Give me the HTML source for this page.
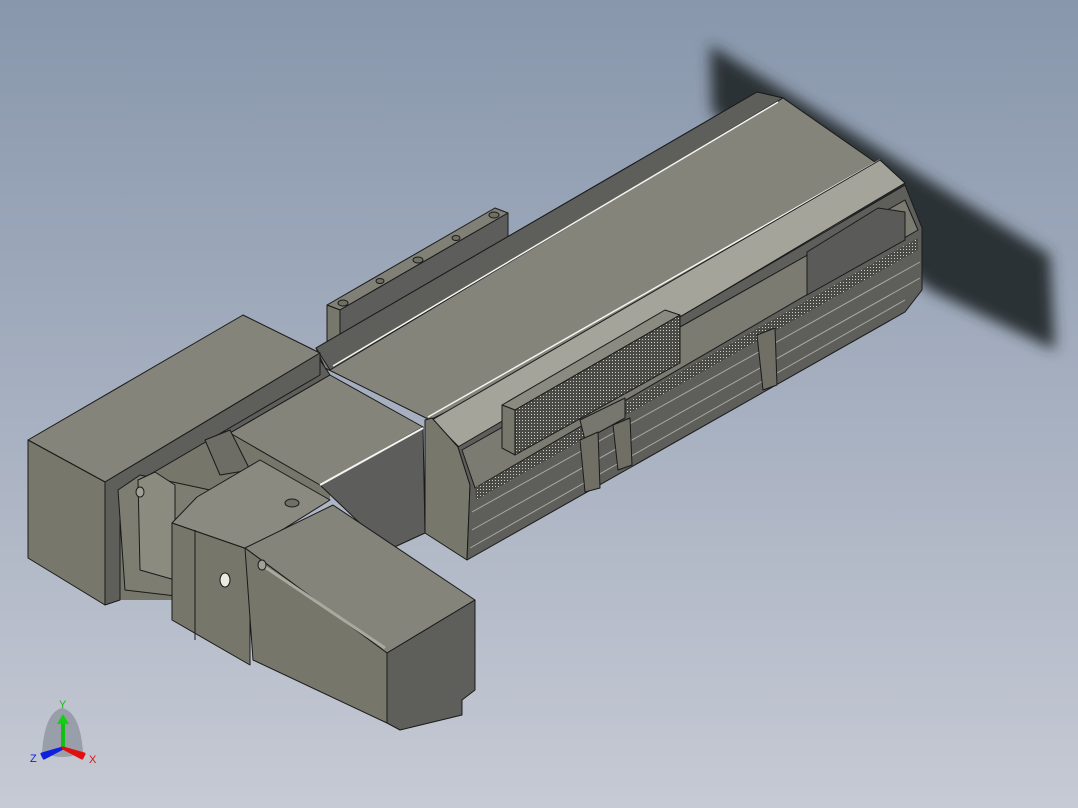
<!DOCTYPE html>
<html><head><meta charset="utf-8"><style>
html,body{margin:0;padding:0;width:1078px;height:808px;overflow:hidden}
body{background:linear-gradient(180deg,#8897ac 0%,#a3adbe 45%,#c6cad4 100%)}
svg{position:absolute;left:0;top:0}
</style></head><body>
<svg width="1078" height="808" viewBox="0 0 1078 808" stroke="#1a1a1a" stroke-width="1" stroke-linejoin="round">
<defs>
<filter id="b" x="-20%" y="-20%" width="140%" height="140%"><feGaussianBlur stdDeviation="7"/></filter>
<pattern id="dots" width="3" height="3" patternUnits="userSpaceOnUse"><rect width="3" height="3" fill="#4a4a46" stroke="none"/><rect width="1" height="1" fill="#cfcfc4" stroke="none"/></pattern>
</defs>
<!-- shadow -->
<polygon points="710,45 1050,255 1055,350 930,290 712,112" fill="#2c3036" stroke="none" filter="url(#b)"/>
<!-- back plate -->
<polygon points="327,305 495,208 508,213 340,310" fill="#808076"/>
<polygon points="340,310 508,213 508,250 340,347" fill="#5d5d5b"/>
<polygon points="327,305 340,310 340,347 327,352" fill="#77776b"/>
<g fill="#6f6f66"><ellipse cx="343" cy="303" rx="5" ry="3"/><ellipse cx="380" cy="281" rx="4" ry="2.5"/><ellipse cx="418" cy="260" rx="5" ry="3"/><ellipse cx="456" cy="238" rx="4" ry="2.5"/><ellipse cx="494" cy="215" rx="5" ry="3"/></g>
<!-- base filler under boxes -->
<polygon points="105,482 320,353 330,375 330,500 250,550 172,523 172,600 120,600" fill="#76766b" stroke="none"/>
<!-- rail top -->
<polygon points="316,348 757,92 783,98 905,183 430,420 325,368" fill="#84847b"/>
<polygon points="316,348 757,92 783,98 330,370" fill="#5e5e5b"/>
<line x1="333" y1="366" x2="778" y2="102" stroke="#f4f4f0" stroke-width="1.5"/>
<line x1="428" y1="417" x2="880" y2="160" stroke="#f4f4f0" stroke-width="1.5"/>
<polygon points="432,420 880,160 905,183 460,448" fill="#a4a49a"/>
<!-- end face -->
<polygon points="425,420 432,418 458,447 470,485 467,560 425,533" fill="#77776b"/>
<!-- side face -->
<polygon points="458,447 905,185 922,228 922,290 905,312 467,560 470,485" fill="#5e5e5b"/>
<polygon points="462,450 905,200 918,230 475,488" fill="#7b7b71"/>
<polygon points="807,252 878,208 905,212 905,240 807,295" fill="#5a5a58"/>
<polygon points="475,488 918,238 918,250 476,500" fill="url(#dots)" stroke="none"/>
<g stroke="#a9a99f" stroke-width="1"><line x1="472" y1="512" x2="920" y2="262"/><line x1="472" y1="530" x2="920" y2="278"/><line x1="470" y1="548" x2="905" y2="300"/></g>
<!-- carriage bar -->
<polygon points="502,405 665,310 680,315 515,410" fill="#8a8a80"/>
<polygon points="515,410 680,315 680,363 515,455" fill="url(#dots)"/>
<polygon points="502,405 515,410 515,455 502,448" fill="#77776b"/>
<!-- clips -->
<polygon points="580,420 625,398 625,418 585,440" fill="#777770"/>
<polygon points="580,440 598,432 600,488 585,492" fill="#6f6f66"/>
<polygon points="613,425 630,418 632,465 618,470" fill="#6f6f66"/>
<polygon points="757,335 775,328 777,385 763,390" fill="#6f6f66"/>
<!-- dark strip between box and coupler -->
<polygon points="207,427 320,360 330,375 230,433" fill="#5e5e5b"/>
<!-- coupler box -->
<polygon points="230,433 330,375 423,427 320,485" fill="#84847b"/>
<polygon points="320,485 423,427 425,533 388,550" fill="#5d5d5b"/>
<line x1="320" y1="485" x2="423" y2="428" stroke="#f4f4f0" stroke-width="2"/>
<!-- big box -->
<polygon points="28,440 243,315 320,353 105,482" fill="#84847b"/>
<polygon points="28,440 105,482 105,605 28,558" fill="#77776b"/>
<polygon points="105,482 320,353 320,375 120,492 120,600 105,605" fill="#5e5e5b"/>
<!-- flange -->
<polygon points="118,490 140,475 210,490 210,600 125,590" fill="#7d7d72"/>
<polygon points="138,480 155,472 175,485 175,580 140,570" fill="#8b8b80"/>
<ellipse cx="140" cy="492" rx="4" ry="5" fill="#a0a096"/>
<polygon points="205,440 230,430 250,470 220,475" fill="#6d6d66"/>
<!-- gearbox -->
<polygon points="172,523 197,497 260,460 330,500 250,550" fill="#8a8a80"/>
<polygon points="172,523 250,550 250,665 172,620" fill="#76766b"/>
<line x1="195" y1="530" x2="195" y2="640"/>
<ellipse cx="225" cy="580" rx="5" ry="7" fill="#eaeae0"/>
<ellipse cx="292" cy="503" rx="7" ry="4" fill="#6f6f66"/>
<!-- motor -->
<polygon points="245,548 333,505 475,600 387,653" fill="#84847b"/>
<polygon points="387,653 475,600 475,690 462,700 462,715 400,730 387,723" fill="#5e5e5b"/>
<polygon points="245,548 387,653 387,723 253,660" fill="#76766b"/>
<line x1="262" y1="565" x2="385" y2="648" stroke="#a9a99e" stroke-width="3"/>
<ellipse cx="262" cy="565" rx="4" ry="5" fill="#a0a096"/>
<!-- axis triad -->
<g stroke="none">
<path d="M42,752 Q45,712 62,708 Q80,712 83,752 Q62,762 42,752Z" fill="#7f8690" opacity="0.6"/>
<rect x="61" y="722" width="4" height="26" fill="#12c012"/>
<path d="M57,724 L63,714 L69,724Z" fill="#12d012"/>
<path d="M63,748 L44,758 L42,754 Z" fill="#1020e0" stroke="#1020e0" stroke-width="3"/>
<path d="M63,748 L82,758 L84,754 Z" fill="#e01010" stroke="#e01010" stroke-width="3"/>
</g>
<g font-family="Liberation Sans,sans-serif" font-size="11" stroke="none">
<text x="59" y="708" fill="#10c010">Y</text>
<text x="30" y="762" fill="#1020e0">Z</text>
<text x="89" y="763" fill="#e01010">X</text>
</g>
</svg>
</body></html>
